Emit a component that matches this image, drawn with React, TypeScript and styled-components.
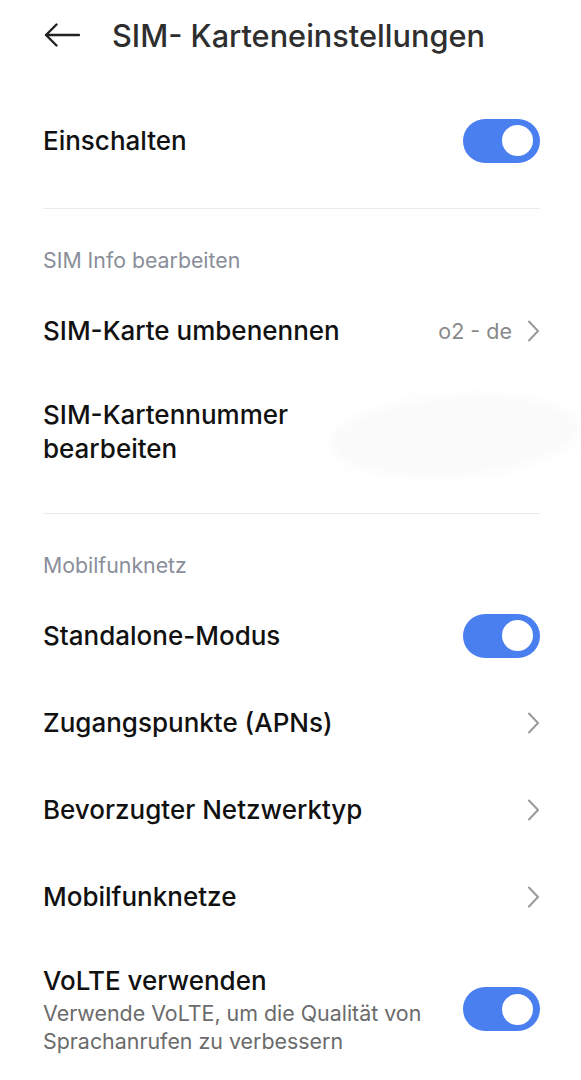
import React from "react";
import styled, { createGlobalStyle } from "styled-components";

const Global = createGlobalStyle`
  html, body { margin: 0; padding: 0; background: #ffffff; }
  body { font-family: Inter, "Noto Sans", sans-serif; -webkit-font-smoothing: antialiased; }
`;

const Page = styled.div`
  width: 581px;
  min-height: 1080px;
  background: #fff;
  overflow: hidden;
`;

const Header = styled.header`
  height: 70px;
  display: flex;
  align-items: center;
  padding-left: 44px;
  gap: 32px;
`;

const BackButton = styled.button`
  border: 0;
  background: none;
  padding: 0;
  width: 36px;
  height: 24px;
  display: flex;
  align-items: center;
  color: #222;
`;

const Title = styled.h1`
  margin: 0;
  font-size: 30.7px;
  font-weight: 500;
  color: #2e2e2e;
  letter-spacing: 0;
`;

const Content = styled.main`
  padding: 27px 41px 0 43px;
`;

const Row = styled.div<{ $multi?: boolean }>`
  display: flex;
  align-items: center;
  justify-content: space-between;
  min-height: 87px;
  padding: ${(p) => (p.$multi ? "23.5px 0" : "20px 0")};
  box-sizing: border-box;
  gap: 16px;
  position: relative;
`;

const TextBlock = styled.div`
  display: flex;
  flex-direction: column;
  max-width: 400px;
`;

const RowTitle = styled.div`
  font-size: 26px;
  line-height: 34px;
  font-weight: 500;
  color: #111;
`;

const RowSubtitle = styled.div`
  font-size: 21.4px;
  line-height: 28px;
  color: #6b6b6b;
  margin-top: 1px;
`;

const Divider = styled.hr`
  border: 0;
  height: 1px;
  background: #ebebeb;
  margin: 0;
`;

const DividerWrap = styled.div`
  padding: 24px 0 0;
`;

const SectionHeader = styled.div`
  padding: 39px 0 15px;
  font-size: 21.3px;
  line-height: 24px;
  color: #8a8e9a;
`;

const Trailing = styled.div`
  display: flex;
  align-items: center;
  gap: 15px;
  color: #8a8a8a;
  font-size: 21.5px;
  flex-shrink: 0;
`;

const Track = styled.div<{ $on: boolean }>`
  width: 77px;
  height: 44px;
  border-radius: 22px;
  background: ${(p) => (p.$on ? "#4a7ff0" : "#d9d9d9")};
  position: relative;
  flex-shrink: 0;
`;

const Knob = styled.div<{ $on: boolean }>`
  position: absolute;
  top: 6.5px;
  ${(p) => (p.$on ? "right: 7px;" : "left: 7px;")}
  width: 31px;
  height: 31px;
  border-radius: 50%;
  background: #fff;
`;

const Blurred = styled.div`
  position: absolute;
  right: -40px;
  top: 50%;
  width: 250px;
  height: 80px;
  transform: translateY(-45%) rotate(-4deg);
  border-radius: 50%;
  background: #fafafa;
  filter: blur(6px);
`;

const Toggle = ({ on }: { on: boolean }) => (
  <Track $on={on}>
    <Knob $on={on} />
  </Track>
);

const Chevron = () => (
  <svg width="13" height="22" viewBox="0 0 13 22" fill="none">
    <path d="M2 1.5 L11 11 L2 20.5" stroke="#9a9a9a" strokeWidth="2" strokeLinecap="round" strokeLinejoin="round" />
  </svg>
);

const BackArrow = () => (
  <svg width="36" height="24" viewBox="0 0 36 24" fill="none">
    <path d="M2 12 H35 M12.5 1.5 L2 12 L12.5 22.5" stroke="#222" strokeWidth="2.4" strokeLinecap="round" strokeLinejoin="round" />
  </svg>
);

export default function App() {
  return (
    <Page>
      <Global />
      <Header>
        <BackButton aria-label="Zurück">
          <BackArrow />
        </BackButton>
        <Title>SIM- Karteneinstellungen</Title>
      </Header>
      <Content>
        <Row>
          <RowTitle>Einschalten</RowTitle>
          <Toggle on />
        </Row>
        <DividerWrap>
          <Divider />
        </DividerWrap>
        <SectionHeader>SIM Info bearbeiten</SectionHeader>
        <Row>
          <RowTitle>SIM-Karte umbenennen</RowTitle>
          <Trailing>
            <span>o2 - de</span>
            <Chevron />
          </Trailing>
        </Row>
        <Row $multi>
          <TextBlock>
            <RowTitle>
              SIM-Kartennummer
              <br />
              bearbeiten
            </RowTitle>
          </TextBlock>
          <Blurred />
        </Row>
        <DividerWrap>
          <Divider />
        </DividerWrap>
        <SectionHeader>Mobilfunknetz</SectionHeader>
        <Row>
          <RowTitle>Standalone-Modus</RowTitle>
          <Toggle on />
        </Row>
        <Row>
          <RowTitle>Zugangspunkte (APNs)</RowTitle>
          <Trailing>
            <Chevron />
          </Trailing>
        </Row>
        <Row>
          <RowTitle>Bevorzugter Netzwerktyp</RowTitle>
          <Trailing>
            <Chevron />
          </Trailing>
        </Row>
        <Row>
          <RowTitle>Mobilfunknetze</RowTitle>
          <Trailing>
            <Chevron />
          </Trailing>
        </Row>
        <Row $multi>
          <TextBlock>
            <RowTitle>VoLTE verwenden</RowTitle>
            <RowSubtitle>
              Verwende VoLTE, um die Qualität von Sprachanrufen zu verbessern
            </RowSubtitle>
          </TextBlock>
          <Toggle on />
        </Row>
      </Content>
    </Page>
  );
}
